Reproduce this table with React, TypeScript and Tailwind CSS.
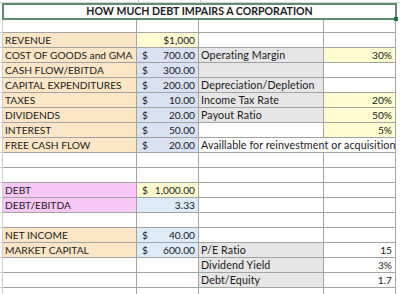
import React from "react"

type Cell = { text?: string; dollar?: string; bg?: string; align?: "left" | "right" | "dollar"; span?: boolean }
type Row = { a?: Cell; b?: Cell; c?: Cell; d?: Cell }

const orange = "bg-[#fce6c6]"
const lavender = "bg-[#d9e2f3]"
const sky = "bg-[#dcebf7]"
const gray = "bg-[#e6e6e6]"
const yellow = "bg-[#fefcd0]"
const pink = "bg-[#f7c8f5]"

const rows: Row[] = [
  { a: { text: "REVENUE", bg: orange }, b: { text: "$1,000", bg: yellow, align: "right" } },
  { a: { text: "COST OF GOODS and GMA", bg: orange }, b: { dollar: "700.00", bg: lavender, align: "dollar" }, c: { text: "Operating Margin", bg: gray }, d: { text: "30%", bg: yellow, align: "right" } },
  { a: { text: "CASH FLOW/EBITDA", bg: orange }, b: { dollar: "300.00", bg: lavender, align: "dollar" }, c: { bg: gray } },
  { a: { text: "CAPITAL EXPENDITURES", bg: orange }, b: { dollar: "200.00", bg: lavender, align: "dollar" }, c: { text: "Depreciation/Depletion", bg: gray } },
  { a: { text: "TAXES", bg: orange }, b: { dollar: "10.00", bg: lavender, align: "dollar" }, c: { text: "Income Tax Rate", bg: gray }, d: { text: "20%", bg: yellow, align: "right" } },
  { a: { text: "DIVIDENDS", bg: orange }, b: { dollar: "20.00", bg: lavender, align: "dollar" }, c: { text: "Payout Ratio", bg: gray }, d: { text: "50%", bg: yellow, align: "right" } },
  { a: { text: "INTEREST", bg: orange }, b: { dollar: "50.00", bg: lavender, align: "dollar" }, d: { text: "5%", bg: yellow, align: "right" } },
  { a: { text: "FREE CASH FLOW", bg: orange }, b: { dollar: "20.00", bg: lavender, align: "dollar" }, c: { text: "Availlable for reinvestment or acquisition", span: true } },
  {},
  {},
  { a: { text: "DEBT", bg: pink }, b: { dollar: "1,000.00", bg: yellow, align: "dollar" } },
  { a: { text: "DEBT/EBITDA", bg: pink }, b: { text: "3.33", bg: sky, align: "right" } },
  {},
  { a: { text: "NET INCOME", bg: orange }, b: { dollar: "40.00", bg: sky, align: "dollar" } },
  { a: { text: "MARKET CAPITAL", bg: orange }, b: { dollar: "600.00", bg: sky, align: "dollar" }, c: { text: "P/E Ratio", bg: gray }, d: { text: "15", align: "right" } },
  { c: { text: "Dividend Yield", bg: gray }, d: { text: "3%", align: "right" } },
  { c: { text: "Debt/Equity", bg: gray }, d: { text: "1.7", align: "right" } },
  {},
]

function CellBox({ cell, extra = "" }: { cell?: Cell; extra?: string }) {
  const bg = cell?.bg || "bg-white"
  const base = `h-[15px] border-r border-b border-[#a3a3a3] ${bg} ${extra} flex items-center whitespace-nowrap leading-none`
  if (cell?.align === "dollar") {
    return (
      <div className={`${base} justify-between pl-[5px] pr-[3px]`}>
        <span>$</span>
        <span>{cell.dollar}</span>
      </div>
    )
  }
  if (cell?.align === "right") {
    return <div className={`${base} justify-end pr-[3px]`}>{cell.text}</div>
  }
  return <div className={`${base} pl-[2px]`}>{cell?.text}</div>
}

export default function App() {
  return (
    <div className="w-[400px] h-[294px] overflow-hidden bg-white text-[#1b1b1b] text-[10.2px]" style={{ fontFamily: "Lato, 'Open Sans', sans-serif" }}>
      {/* header strip */}
      <div className="h-[3px] border-b border-[#d6d6d6] flex">
        <div className="w-[139px] border-r border-[#c9c9c9]" />
        <div className="w-[62px] border-r border-[#c9c9c9]" />
      </div>

      {/* title row */}
      <div className="flex h-[17px]">
        <div className="w-[2px]" />
        <div className="relative w-[395px] border-2 border-[#5f8c70] flex items-center justify-center font-bold text-[10.6px]">
          HOW MUCH DEBT IMPAIRS A CORPORATION
          <div className="absolute -right-[3px] -bottom-[3px] w-[4px] h-[4px] bg-[#217346]" />
        </div>
      </div>

      {/* empty row */}
      <div className="grid grid-cols-[3px_134px_62px_125px_72px_4px] h-[13px]">
        <div className="border-r border-b border-[#cfcfcf]" />
        <div className="border-r border-b border-[#a3a3a3]" />
        <div className="border-r border-b border-[#a3a3a3]" />
        <div className="border-r border-b border-[#a3a3a3]" />
        <div className="border-r border-b border-[#a3a3a3]" />
        <div />
      </div>

      {rows.map((r, i) => (
        <div key={i} className="grid grid-cols-[3px_134px_62px_125px_72px_4px]">
          <div className="h-[15px] border-r border-b border-[#cfcfcf]" />
          <CellBox cell={r.a} />
          <CellBox cell={r.b} />
          {r.c?.span ? (
            <CellBox cell={r.c} extra="col-span-2 text-[10.7px] tracking-[0.1px]" />
          ) : (
            <>
              <CellBox cell={r.c} extra="text-[10.7px] tracking-[0.1px]" />
              <CellBox cell={r.d} />
            </>
          )}
          <div />
        </div>
      ))}
    </div>
  )
}
